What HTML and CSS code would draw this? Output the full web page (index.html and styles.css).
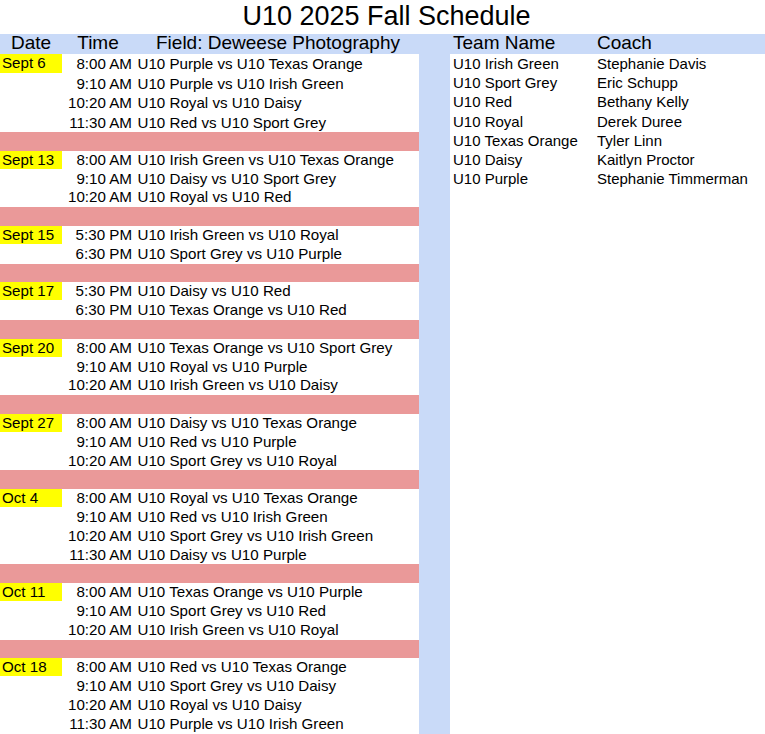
FILE: index.html
```html
<!DOCTYPE html>
<html lang="en">
<head>
<meta charset="utf-8">
<title>U10 2025 Fall Schedule</title>
<link rel="stylesheet" href="styles.css">
</head>
<body>
<h1 class="title">U10 2025 Fall Schedule</h1>
<div class="sheet">
  <section class="schedule">
    <div class="head">
      <div>Date</div><div>Time</div><div>Field: Deweese Photography</div>
    </div>

    <div class="row tall"><div class="date">Sept 6</div><div class="time">8:00 AM</div><div class="match">U10 Purple vs U10 Texas Orange</div></div>
    <div class="row tall"><div></div><div class="time">9:10 AM</div><div class="match">U10 Purple vs U10 Irish Green</div></div>
    <div class="row tall"><div></div><div class="time">10:20 AM</div><div class="match">U10 Royal vs U10 Daisy</div></div>
    <div class="row tall"><div></div><div class="time">11:30 AM</div><div class="match">U10 Red vs U10 Sport Grey</div></div>
    <div class="gap"></div>

    <div class="row"><div class="date">Sept 13</div><div class="time">8:00 AM</div><div class="match">U10 Irish Green vs U10 Texas Orange</div></div>
    <div class="row"><div></div><div class="time">9:10 AM</div><div class="match">U10 Daisy vs U10 Sport Grey</div></div>
    <div class="row"><div></div><div class="time">10:20 AM</div><div class="match">U10 Royal vs U10 Red</div></div>
    <div class="gap"></div>

    <div class="row"><div class="date">Sept 15</div><div class="time">5:30 PM</div><div class="match">U10 Irish Green vs U10 Royal</div></div>
    <div class="row"><div></div><div class="time">6:30 PM</div><div class="match">U10 Sport Grey vs U10 Purple</div></div>
    <div class="gap"></div>

    <div class="row"><div class="date">Sept 17</div><div class="time">5:30 PM</div><div class="match">U10 Daisy vs U10 Red</div></div>
    <div class="row"><div></div><div class="time">6:30 PM</div><div class="match">U10 Texas Orange vs U10 Red</div></div>
    <div class="gap"></div>

    <div class="row"><div class="date">Sept 20</div><div class="time">8:00 AM</div><div class="match">U10 Texas Orange vs U10 Sport Grey</div></div>
    <div class="row"><div></div><div class="time">9:10 AM</div><div class="match">U10 Royal vs U10 Purple</div></div>
    <div class="row"><div></div><div class="time">10:20 AM</div><div class="match">U10 Irish Green vs U10 Daisy</div></div>
    <div class="gap"></div>

    <div class="row"><div class="date">Sept 27</div><div class="time">8:00 AM</div><div class="match">U10 Daisy vs U10 Texas Orange</div></div>
    <div class="row"><div></div><div class="time">9:10 AM</div><div class="match">U10 Red vs U10 Purple</div></div>
    <div class="row"><div></div><div class="time">10:20 AM</div><div class="match">U10 Sport Grey vs U10 Royal</div></div>
    <div class="gap"></div>

    <div class="row"><div class="date">Oct 4</div><div class="time">8:00 AM</div><div class="match">U10 Royal vs U10 Texas Orange</div></div>
    <div class="row"><div></div><div class="time">9:10 AM</div><div class="match">U10 Red vs U10 Irish Green</div></div>
    <div class="row"><div></div><div class="time">10:20 AM</div><div class="match">U10 Sport Grey vs U10 Irish Green</div></div>
    <div class="row"><div></div><div class="time">11:30 AM</div><div class="match">U10 Daisy vs U10 Purple</div></div>
    <div class="gap"></div>

    <div class="row"><div class="date">Oct 11</div><div class="time">8:00 AM</div><div class="match">U10 Texas Orange vs U10 Purple</div></div>
    <div class="row"><div></div><div class="time">9:10 AM</div><div class="match">U10 Sport Grey vs U10 Red</div></div>
    <div class="row"><div></div><div class="time">10:20 AM</div><div class="match">U10 Irish Green vs U10 Royal</div></div>
    <div class="gap"></div>

    <div class="row"><div class="date">Oct 18</div><div class="time">8:00 AM</div><div class="match">U10 Red vs U10 Texas Orange</div></div>
    <div class="row"><div></div><div class="time">9:10 AM</div><div class="match">U10 Sport Grey vs U10 Daisy</div></div>
    <div class="row"><div></div><div class="time">10:20 AM</div><div class="match">U10 Royal vs U10 Daisy</div></div>
    <div class="row"><div></div><div class="time">11:30 AM</div><div class="match">U10 Purple vs U10 Irish Green</div></div>
  </section>

  <div class="divider"></div>

  <section class="teams">
    <div class="thead"><div>Team Name</div><div>Coach</div></div>
    <div class="trow"><div>U10 Irish Green</div><div>Stephanie Davis</div></div>
    <div class="trow"><div>U10 Sport Grey</div><div>Eric Schupp</div></div>
    <div class="trow"><div>U10 Red</div><div>Bethany Kelly</div></div>
    <div class="trow"><div>U10 Royal</div><div>Derek Duree</div></div>
    <div class="trow"><div>U10 Texas Orange</div><div>Tyler Linn</div></div>
    <div class="trow"><div>U10 Daisy</div><div>Kaitlyn Proctor</div></div>
    <div class="trow"><div>U10 Purple</div><div>Stephanie Timmerman</div></div>
  </section>
</div>
</body>
</html>
```

FILE: styles.css
```css
html, body {
  margin: 0;
  padding: 0;
  background: #ffffff;
}

body {
  font-family: "Liberation Sans", Arial, sans-serif;
  color: #000000;
}

.title {
  margin: 0;
  height: 34px;
  line-height: 32px;
  padding-left: 8px;
  font-size: 27px;
  font-weight: normal;
  text-align: center;
  white-space: nowrap;
}

.sheet {
  display: flex;
  align-items: stretch;
}

.schedule {
  width: 419px;
  flex: none;
}

.head {
  display: grid;
  grid-template-columns: 62px 72px 1fr;
  height: 20px;
  line-height: 18px;
  font-size: 19px;
  text-align: center;
  background: #c9daf8;
  white-space: nowrap;
}

.head div:last-child {
  padding-left: 3px;
}

.row {
  display: grid;
  grid-template-columns: 62px 70px 1fr;
  height: 18.8px;
  line-height: 18.8px;
  font-size: 15.15px;
  white-space: nowrap;
}

.row.tall {
  height: 19.5px;
  line-height: 19.5px;
}

.date {
  padding-left: 2px;
  background: #ffff00;
  background-clip: padding-box;
  border-bottom: 1px solid transparent;
  line-height: 18px;
}

.time {
  text-align: right;
}

.match {
  padding-left: 5.5px;
}

.gap {
  height: 18.8px;
  background: #ea9999;
}

.divider {
  width: 31px;
  flex: none;
  background: #c9daf8;
}

.teams {
  flex: 1;
}

.thead {
  display: grid;
  grid-template-columns: 144px 1fr;
  height: 20px;
  line-height: 18px;
  font-size: 19px;
  background: #c9daf8;
  padding-left: 3px;
  white-space: nowrap;
}

.trow {
  display: grid;
  grid-template-columns: 144px 1fr;
  height: 19.2px;
  line-height: 19.2px;
  font-size: 15px;
  padding-left: 3px;
  white-space: nowrap;
}
```
